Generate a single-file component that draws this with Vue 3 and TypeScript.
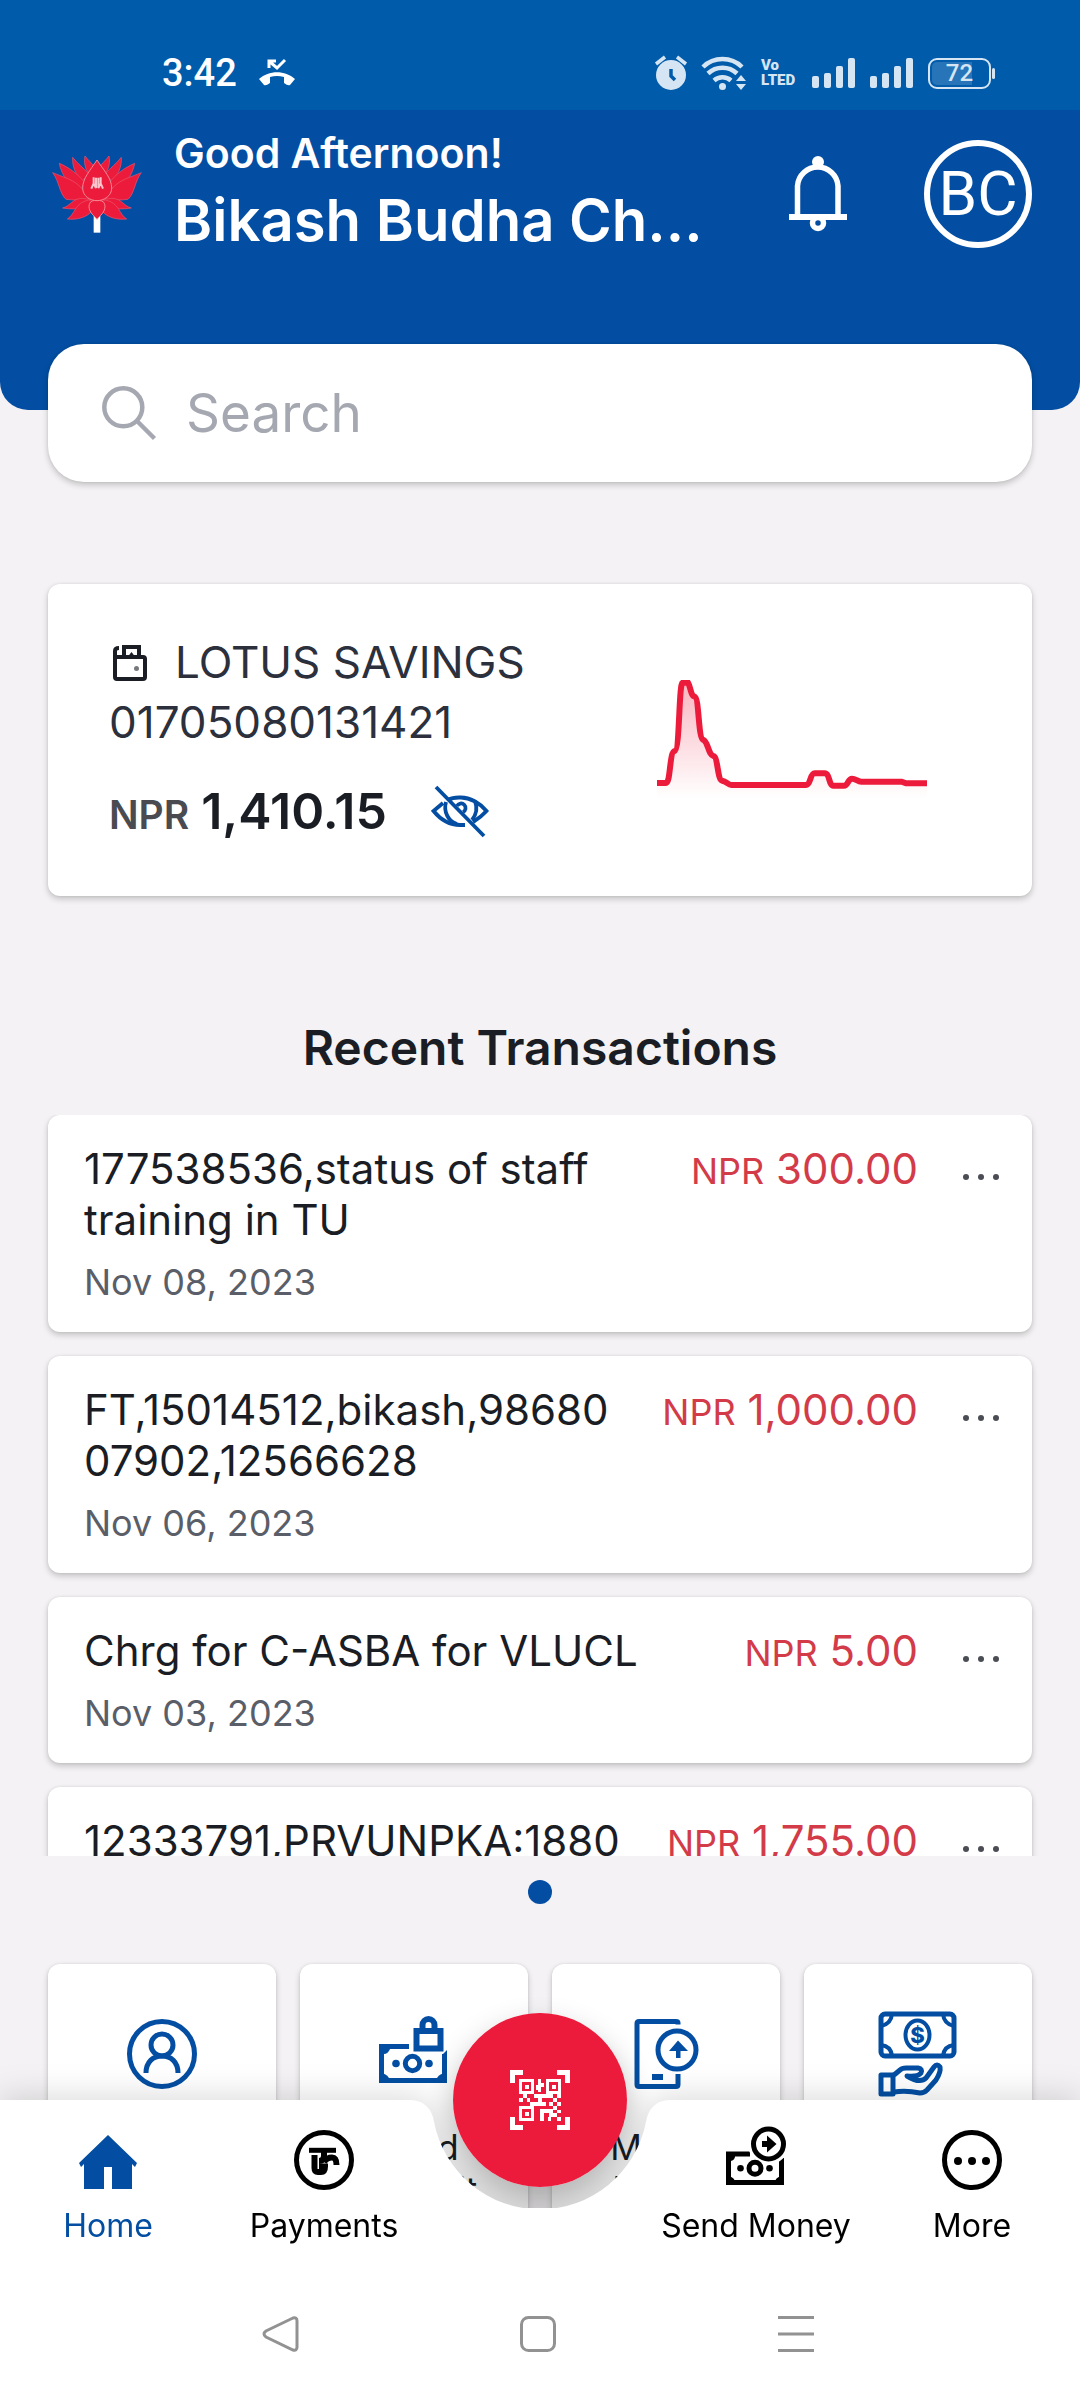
<script setup lang="ts">
interface Transaction {
  title: string
  date: string
  amount: string
}

const transactions: Transaction[] = [
  { title: '177538536,status of staff training in TU', date: 'Nov 08, 2023', amount: '300.00' },
  { title: 'FT,15014512,bikash,98680\n07902,12566628', date: 'Nov 06, 2023', amount: '1,000.00' },
  { title: 'Chrg for C-ASBA for VLUCL', date: 'Nov 03, 2023', amount: '5.00' },
  { title: '12333791,PRVUNPKA:1880', date: 'Nov 02, 2023', amount: '1,755.00' },
]

const signalBars: number[] = [12, 15, 22, 30]
</script>

<template>
  <div class="app">
    <div class="status">
      <span class="time">3:42</span>
      <svg class="missed" width="36" height="28" viewBox="0 0 36 28" fill="#fff">
        <path d="M0 20C10 11 26 11 36 20L31 26Q29 27 25 24L25 18Q18 16 11 18L11 24Q7 27 5 26Z" />
        <path d="M10 9V2H17M10.500 2.500L18 9L26 1" fill="none" stroke="#fff" stroke-width="3" />
      </svg>
      <div class="indicators">
        <svg width="32" height="34" viewBox="0 0 32 34" fill="#d6e5f3">
          <circle cx="16" cy="19" r="15" />
          <path d="M1 8L10 1M31 8L22 1" stroke="#d6e5f3" stroke-width="3.500" />
          <path d="M16 13V20L20 24" fill="none" stroke="#005baa" stroke-width="3.500" />
        </svg>
        <svg width="44" height="34" viewBox="0 0 44 34" fill="none" stroke="#d6e5f3" stroke-width="4.500">
          <path d="M1 11A28 28 0 0 1 40 11M6 17.500A21 21 0 0 1 35 17.500M12 24.500A13 13 0 0 1 29 24.500" />
          <circle cx="20.500" cy="30.500" r="3.500" fill="#d6e5f3" stroke="none" />
          <path d="M34 25L39 19L44 25ZM34 28H44L39 34Z" fill="#d6e5f3" stroke="none" />
        </svg>
        <span class="volte">Vo<br />LTED</span>
        <span v-for="n in 2" :key="n" class="signal">
          <i v-for="h in signalBars" :key="h" :style="{ height: h + 'px' }"></i>
        </span>
        <span class="battery"><span>72</span></span>
      </div>
    </div>

    <header class="header">
      <svg class="logo" width="94" height="80" viewBox="30 70 282 240">
        <rect x="161" y="250" width="20" height="56" fill="#fff" />
        <g fill="#ed1b3b" stroke="#e8566c" stroke-width="2" stroke-linejoin="round">
          <g id="petals">
            <path d="M135 76C131 96 136 116 146 128L166 112C156 98 144 88 135 76Z" />
            <path d="M98 80C96 108 108 136 128 150L146 128C130 112 112 98 98 80Z" />
            <path d="M58 98C64 134 90 166 116 188L134 156C116 132 90 112 58 98Z" />
            <path d="M38 126C58 152 58 188 78 206C100 210 130 206 156 205L124 172C104 148 72 140 38 126Z" />
            <path d="M68 232C92 226 96 204 126 203L166 208C150 230 116 240 68 232Z" />
            <path d="M82 265C106 250 104 216 146 208L162 216C166 246 130 270 82 265Z" />
          </g>
          <use href="#petals" transform="matrix(-1 0 0 1 342 0)" />
          <g stroke="#f68793" stroke-width="3">
            <path d="M171 88C150 120 128 143 128 172C128 196 150 210 171 210C192 210 215 196 215 172C215 143 192 120 171 88Z" />
            <path d="M171 210C148 206 144 224 149 238C154 252 166 258 171 266C176 258 188 252 193 238C198 224 194 206 171 210Z" />
          </g>
        </g>
        <path d="M161 140V158L154 174M168 141V172L162 160M175 141V172L181 160M182 140V158L189 174" fill="none" stroke="#fbc5cb" stroke-width="6" />
      </svg>
      <div class="who">
        <p class="greeting">Good Afternoon!</p>
        <h1 class="name">Bikash Budha Ch…</h1>
      </div>
      <button class="bell" type="button" aria-label="Notifications">
        <svg width="58" height="76" viewBox="0 0 58 76" fill="none" stroke="#fff" stroke-width="5.500">
          <circle cx="29" cy="6" r="6" fill="#fff" stroke="none" />
          <path d="M8.500 60V30A20.300 20.300 0 0 1 49 30V60" />
          <path d="M0 61H58" stroke-width="6" />
          <circle cx="29" cy="67" r="5.500" />
        </svg>
      </button>
      <button class="avatar" type="button" aria-label="Profile">BC</button>
    </header>

    <main class="content">
      <label class="search card">
        <svg width="54" height="54" viewBox="0 0 54 54" fill="none" stroke="#a5a8b1" stroke-width="4.500">
          <circle cx="21.300" cy="21.300" r="19" />
          <path d="M35 35L52.500 52.500" />
        </svg>
        <input type="search" placeholder="Search" aria-label="Search" />
      </label>

      <section class="account card">
        <div class="details">
          <div class="product">
            <svg width="34" height="36" viewBox="0 0 34 36" fill="none" stroke="#1a1d23" stroke-width="4">
              <rect x="2" y="12" width="30" height="22" rx="2" />
              <path d="M2 14V6Q2 3 6 3M11 11V2H26V11" />
              <path d="M17 11L18.500 9L20 11" stroke-width="2.500" />
              <circle cx="23.500" cy="23.500" r="2.500" fill="#77797d" stroke="none" />
            </svg>
            <span>LOTUS SAVINGS</span>
          </div>
          <p class="number">01705080131421</p>
          <div class="balance">
            <span class="currency">NPR</span>
            <strong>1,410.15</strong>
            <button type="button" aria-label="Hide balance">
              <svg width="58" height="51" viewBox="0 0 58 51" fill="none" stroke="#034ea2" stroke-width="3.800">
                <path d="M5 1L53 50" />
                <path d="M17 14C22 11 26 11.500 30 11.500C39 11.500 49 17 55.500 25C51 30 47 33 42 36M12 17L2.500 25C9 33 18 39 29 39H34" />
                <path d="M15 16C12 26 18 36 26 38M44 15C47 23 45 29 41 34" />
                <path d="M26 20A4.500 4.500 0 1 1 32 26" />
              </svg>
            </button>
          </div>
        </div>
        <svg class="chart" width="270" height="120" viewBox="171 330 810 360" aria-label="Balance trend">
          <defs>
            <linearGradient id="fade" x1="0" y1="0" x2="0" y2="1">
              <stop offset="0" stop-color="#ed1b3b" stop-opacity=".32" />
              <stop offset="1" stop-color="#ed1b3b" stop-opacity="0" />
            </linearGradient>
          </defs>
          <path fill="url(#fade)" d="M171 639H198C212 639 208 545 224 543C240 540 236 338 248 338H264C272 350 272 378 284 380C298 384 294 505 310 510C324 514 325 555 340 558C354 560 352 628 366 632C380 634 384 645 394 645H618C632 645 630 610 644 610H674C690 610 686 647 700 647H732C744 647 744 626 756 626C768 626 772 635 784 635H905L918 640H981V685H171Z" />
          <path fill="none" stroke="#ed1b3b" stroke-width="18" d="M171 639H198C212 639 208 545 224 543C240 540 236 338 248 338H264C272 350 272 378 284 380C298 384 294 505 310 510C324 514 325 555 340 558C354 560 352 628 366 632C380 634 384 645 394 645H618C632 645 630 610 644 610H674C690 610 686 647 700 647H732C744 647 744 626 756 626C768 626 772 635 784 635H905L918 640H981" />
        </svg>
      </section>

      <h2 class="heading">Recent Transactions</h2>
      <ul class="transactions">
        <li v-for="t in transactions" :key="t.title" class="card">
          <div class="entry">
            <p class="title">{{ t.title }}</p>
            <p class="date">{{ t.date }}</p>
          </div>
          <p class="amount"><small>NPR</small> {{ t.amount }}</p>
          <button class="dots" type="button" aria-label="Details"><i></i><i></i><i></i></button>
        </li>
      </ul>
      <div class="pager"><i></i></div>

      <div class="tiles">
        <button class="tile card" type="button" aria-label="Account">
          <svg width="84" height="84" viewBox="0 0 84 84" fill="none" stroke="#034ea2" stroke-width="5">
            <circle cx="42" cy="42" r="32.500" />
            <circle cx="42" cy="33" r="11" />
            <path d="M26 61C26 50 33 44 42 44C51 44 58 50 58 61" />
          </svg>
        </button>
        <button class="tile card" type="button">
          <svg width="84" height="84" viewBox="0 0 84 84" fill="none" stroke="#034ea2" stroke-width="5">
            <path d="M37 34.500H9.500V68.500H72.500V42" />
            <path d="M7 32H18V37Q16 42 12 42H7ZM7 71V61Q14 61 17 66V71ZM75 71V61Q68 61 65 66V71ZM75 38L70 43V48H75Z" fill="#034ea2" stroke="none" />
            <circle cx="40.500" cy="51.500" r="7.200" />
            <circle cx="24" cy="51.500" r="3.800" fill="#034ea2" stroke="none" />
            <circle cx="57" cy="51.500" r="3.800" fill="#034ea2" stroke="none" />
            <rect x="44.500" y="19" width="24" height="17.500" stroke-width="6" />
            <path d="M50.500 18V13A6 6 0 0 1 62.500 13V18" stroke-width="6" />
          </svg>
          <span>Fixed Deposit</span>
        </button>
        <button class="tile card" type="button">
          <svg width="84" height="84" viewBox="0 0 84 84" fill="none" stroke="#034ea2" stroke-width="5">
            <path d="M54 12.500V11Q54 9.500 52 9.500H15Q13 9.500 13 11.500V72.500Q13 74.500 15 74.500H52Q54 74.500 54 72.500V62" />
            <circle cx="53" cy="38" r="19" />
            <path d="M54 28.500L64 39H56.500V46H52V39H45ZM28 62H39V68H28Z" fill="#034ea2" stroke="none" />
          </svg>
          <span>Mobile Topup</span>
        </button>
        <button class="tile card" type="button" aria-label="Loan">
          <svg width="84" height="84" viewBox="0 0 84 84" fill="none" stroke="#034ea2" stroke-width="5" stroke-linejoin="round">
            <rect x="5" y="2" width="73" height="42" rx="4" />
            <path d="M5 14Q15 12 16 2M67 2Q68 12 78 14M5 33Q15 34 16 44M67 44Q68 34 78 33" stroke-width="4" />
            <ellipse cx="41.500" cy="23" rx="12" ry="14.500" stroke-width="4" />
            <text x="41.500" y="31" text-anchor="middle" font-family="Inter, sans-serif" font-size="22" font-weight="800" fill="#034ea2" stroke="none">$</text>
            <rect x="5" y="63" width="12" height="19" />
            <path d="M18 63L24 58Q26 56 30 56H42Q47 57 45 61Q42 65 31 64Q44 72 50 66L58 55Q61 51 64 55Q65 60 60 68L51 78Q48 81 44 81Q30 78 18 80" />
          </svg>
        </button>
      </div>
    </main>

    <nav class="dock">
      <div class="shade"></div>
      <div class="backdrop">
        <i></i>
        <svg width="260" height="110" viewBox="0 0 260 110" fill="#fff">
          <path d="M0 0C14 0 22 9 24 22A108 108 0 0 0 236 22C238 9 246 0 260 0V110H0Z" />
        </svg>
        <i></i>
      </div>
      <ul class="tabs">
        <li>
          <a href="#home" class="active">
            <svg width="60" height="60" viewBox="0 0 60 60" fill="#034ea2">
              <path d="M30 5L59 33L57 37L54 34V59H34V37H26V59H6V34L3 37L1 33Z" />
            </svg>
            Home
          </a>
        </li>
        <li>
          <a href="#payments">
            <svg width="60" height="60" viewBox="0 0 60 60" fill="none" stroke="#000" stroke-width="5">
              <circle cx="30" cy="30" r="27.500" />
              <path d="M15 20.300H42" />
              <path d="M20.500 25V38Q20.500 42 24 42H27Q31 42 31 36.500H25" stroke-width="6" />
              <path d="M30 21V26Q30 31 25 31M30 32Q33 27.500 38 27.500Q42.500 27.500 42.500 35" stroke-width="6" />
            </svg>
            Payments
          </a>
        </li>
        <li class="middle">
          <button class="scan" type="button" aria-label="Scan QR">
            <svg width="60" height="60" viewBox="270 240 180 180" fill="#fff" shape-rendering="crispEdges">
              <path d="M270 240H308V254H284V278H270ZM450 240H412V254H436V278H450ZM270 420H308V406H284V382H270ZM450 420H412V406H436V382H450Z" />
              <path fill-rule="evenodd" d="M297 267H342V312H297ZM306 276V303H333V276ZM378 267H423V312H378ZM387 276V303H414V276ZM297 348H342V393H297ZM306 357V384H333V357Z" />
              <path d="M314 284H326V296H314ZM395 284H407V296H395ZM314 365H326V377H314Z" />
              <path d="M355 267H364V279H372V291H364V305H355V300H347V285H355ZM309 312H320V324H309ZM297 324H309V336H297ZM320 324H331V336H320ZM342 312H388V324H366V336H378V348H330V336H354V324H342ZM388 312H400V324H388ZM411 312H423V324H411ZM400 324H411V336H400ZM388 336H400V348H388ZM411 336H423V348H411ZM400 348H411V360H400ZM411 360H423V370H411ZM360 358H400V370H372V393H360ZM386 370H411V380H400V382H386ZM384 382H394V393H384ZM411 382H423V393H411Z" />
            </svg>
          </button>
        </li>
        <li>
          <a href="#send">
            <svg width="60" height="60" viewBox="0 0 60 60" fill="none" stroke="#000" stroke-width="5">
              <path d="M24 24H2.500V52.500H55.500V28" />
              <path d="M0 22H9V27Q8 31 4 31H0ZM0 55V46Q7 46 9 51V55ZM58 55V46Q51 46 49 51V55Z" fill="#000" stroke="none" />
              <circle cx="42.500" cy="14" r="18" fill="#fff" stroke="#fff" />
              <circle cx="42.500" cy="14" r="15" />
              <circle cx="29" cy="38.300" r="6" />
              <circle cx="14.500" cy="38.300" r="3.300" fill="#000" stroke="none" />
              <circle cx="43.500" cy="38.300" r="3.300" fill="#000" stroke="none" />
              <path d="M36 11H41V5.500L50.500 14L41 22.500V17H36Z" fill="#000" stroke="none" />
            </svg>
            Send Money
          </a>
        </li>
        <li>
          <a href="#more">
            <svg width="60" height="60" viewBox="0 0 60 60">
              <circle cx="30" cy="30" r="27.500" fill="none" stroke="#000" stroke-width="5" />
              <circle cx="16" cy="31" r="4" /><circle cx="30" cy="31" r="4" /><circle cx="44" cy="31" r="4" />
            </svg>
            More
          </a>
        </li>
      </ul>
      <div class="system">
        <button type="button" aria-label="Back">
          <svg width="36" height="36" viewBox="0 0 36 36"><path d="M31 2L4 15Q0 18 4 21L31 34Q35 35 35 31V5Q35 1 31 2Z" /></svg>
        </button>
        <button type="button" aria-label="Home screen">
          <svg width="36" height="36" viewBox="0 0 36 36"><rect x="1.500" y="1.500" width="33" height="33" rx="7" /></svg>
        </button>
        <button type="button" aria-label="Recent apps">
          <svg width="36" height="36" viewBox="0 0 36 36"><path d="M0 1.500H36M0 18H36M0 34.500H36" /></svg>
        </button>
      </div>
    </nav>
  </div>
</template>

<style>
body {
  background: #f4f2f4;
}
</style>

<style scoped>
.app {
  min-height: 100vh;
  overflow: hidden;
  font-family: Inter, 'Liberation Sans', sans-serif;
  color: #1a1d23;
  background: #f4f2f4;
}
p, h1, h2, ul {
  margin: 0;
  padding: 0;
  list-style: none;
}
button {
  padding: 0;
  border: 0;
  background: none;
  font: inherit;
  color: inherit;
}
svg {
  display: block;
  flex: none;
  overflow: visible;
}
.chart {
  align-self: flex-start;
  margin-top: 43px;
  overflow: hidden;
}
.card {
  background: #fff;
  border-radius: 12px;
  box-shadow: 0 3px 6px rgba(0, 0, 0, 0.2), 0 0 3px rgba(0, 0, 0, 0.08);
}

.status {
  display: flex;
  align-items: center;
  height: 74px;
  padding: 36px 85px 0 162px;
  background: #005baa;
  color: #fff;
}
.time {
  font-family: Roboto, sans-serif;
  font-size: 38px;
  font-weight: 500;
  line-height: 44px;
}
.missed {
  margin-left: 22px;
}
.indicators {
  display: flex;
  align-items: center;
  gap: 15px;
  margin-left: auto;
  color: #d6e5f3;
}
.volte {
  width: 36px;
  font-family: Roboto, sans-serif;
  font-size: 15px;
  font-weight: 900;
  line-height: 15px;
}
.signal {
  display: flex;
  align-items: flex-end;
  justify-content: space-between;
  width: 43px;
}
.signal i {
  width: 7px;
  border-radius: 2px;
  background: #d6e5f3;
}
.battery {
  position: relative;
  box-sizing: border-box;
  width: 63px;
  margin-right: 4px;
  padding: 2px;
  border: 2px solid #d6e5f3;
  border-radius: 9px;
  font-family: Roboto, sans-serif;
  font-size: 24px;
  font-weight: 500;
  line-height: 23px;
  text-align: center;
}
.battery span {
  display: block;
  border-radius: 5px;
  background: linear-gradient(90deg, #2874b8 72%, transparent 72%);
}
.battery::after {
  content: '';
  position: absolute;
  top: 8px;
  right: -6px;
  width: 3px;
  height: 11px;
  border-radius: 2px;
  background: #d6e5f3;
}

.header {
  display: flex;
  align-items: center;
  padding: 17px 48px 149px 50px;
  border-radius: 0 0 28px 28px;
  background: #034ea2;
  color: #fff;
}
.who {
  flex: 1;
  margin-left: 30px;
}
.greeting {
  font-size: 41px;
  font-weight: 600;
  line-height: 52px;
}
.name {
  font-size: 58px;
  font-weight: 600;
  line-height: 82px;
  white-space: nowrap;
}
.avatar {
  box-sizing: border-box;
  width: 108px;
  height: 108px;
  margin-left: 77px;
  border: 6px solid #fff;
  border-radius: 50%;
  font-family: Roboto, sans-serif;
  font-size: 62px;
  line-height: 96px;
}

.content {
  padding: 0 48px 240px;
}
.search {
  display: flex;
  align-items: center;
  gap: 30px;
  height: 138px;
  margin-top: -66px;
  padding: 0 54px;
  border-radius: 36px;
}
.search input {
  flex: 1;
  min-width: 0;
  padding: 0;
  border: 0;
  outline: 0;
  background: none;
  font: inherit;
  font-size: 53px;
  line-height: 66px;
  appearance: none;
}
.search input::placeholder {
  color: #a5a8b1;
  opacity: 1;
}
.account {
  display: flex;
  align-items: center;
  justify-content: space-between;
  margin-top: 102px;
  padding: 53px 105px 50px 61px;
}
.product {
  display: flex;
  align-items: center;
  gap: 28px;
  margin-left: 4px;
}
.product,
.number {
  font-size: 44px;
  line-height: 51px;
  color: #2b303c;
}
.number {
  margin-top: 9px;
}
.balance {
  display: flex;
  align-items: baseline;
  margin-top: 28px;
  font-weight: 600;
}
.currency {
  font-size: 39px;
  color: #4a4b50;
}
.balance strong {
  margin-left: 12px;
  font-size: 50px;
  font-weight: 600;
  line-height: 70px;
}
.balance button {
  align-self: center;
  margin-left: 44px;
}

.heading {
  padding: 124px 0 40px;
  font-size: 48px;
  font-weight: 600;
  line-height: 55px;
  text-align: center;
}
.transactions {
  display: flex;
  flex-direction: column;
  gap: 24px;
  max-height: 741px;
  margin: 0 -48px;
  padding: 0 48px;
  overflow: hidden;
  box-sizing: border-box;
}
.transactions li {
  display: flex;
  flex: none;
  align-items: flex-start;
  padding: 28px 33px 28px 36px;
}
.entry {
  width: 62%;
}
.title,
.amount {
  font-size: 42px;
  line-height: 51px;
}
.title {
  overflow-wrap: anywhere;
  white-space: pre-line;
}
.date {
  margin-top: 15px;
  font-size: 36px;
  line-height: 44px;
  color: #5a5e68;
}
.amount {
  flex: 1;
  color: #d33b49;
  text-align: right;
  white-space: nowrap;
}
.amount small {
  font-size: 36px;
}
.dots {
  display: flex;
  gap: 9px;
  margin: 31px 0 0 45px;
}
.dots i {
  width: 6px;
  height: 6px;
  border-radius: 50%;
  background: #4b4d54;
}
.pager {
  display: flex;
  justify-content: center;
  padding: 24px 0 60px;
}
.pager i {
  width: 24px;
  height: 24px;
  border-radius: 50%;
  background: #034ea2;
}
.tiles {
  display: grid;
  grid-template-columns: repeat(4, 1fr);
  gap: 24px;
}
.tile {
  display: flex;
  flex-direction: column;
  align-items: center;
  gap: 30px;
  padding: 48px 40px 30px;
  font-size: 35px;
  line-height: 42px;
}

.dock {
  position: fixed;
  right: 0;
  bottom: 0;
  left: 0;
}
.shade {
  position: absolute;
  top: -87px;
  left: 50%;
  width: 174px;
  height: 174px;
  margin-left: -87px;
  border-radius: 50%;
  box-shadow: 0 16px 32px rgba(0, 0, 0, 0.3);
}
.backdrop {
  position: absolute;
  inset: 0;
  display: flex;
  filter: drop-shadow(0 -4px 16px rgba(0, 0, 0, 0.14));
}
.backdrop::after {
  content: '';
  position: absolute;
  inset: 108px 0 0;
  background: #fff;
}
.backdrop i {
  flex: 1;
  background: #fff;
}
.tabs {
  position: relative;
  display: grid;
  grid-template-columns: repeat(5, 1fr);
  font-size: 32px;
  line-height: 42px;
  text-align: center;
  white-space: nowrap;
}
.tabs a {
  display: flex;
  flex-direction: column;
  align-items: center;
  gap: 15px;
  padding-top: 30px;
  color: #000;
  text-decoration: none;
}
.tabs a.active {
  color: #034ea2;
}
.middle {
  display: flex;
  justify-content: center;
  align-items: flex-start;
}
.scan {
  display: grid;
  place-items: center;
  flex: none;
  width: 174px;
  height: 174px;
  margin-top: -87px;
  margin-bottom: -87px;
  border-radius: 50%;
  background: #ed1b3b;
}
.system {
  position: relative;
  display: flex;
  justify-content: center;
  gap: 222px;
  padding: 69px 4px 48px 0;
}
.system svg {
  fill: none;
  stroke: #929292;
  stroke-width: 3px;
}
</style>
